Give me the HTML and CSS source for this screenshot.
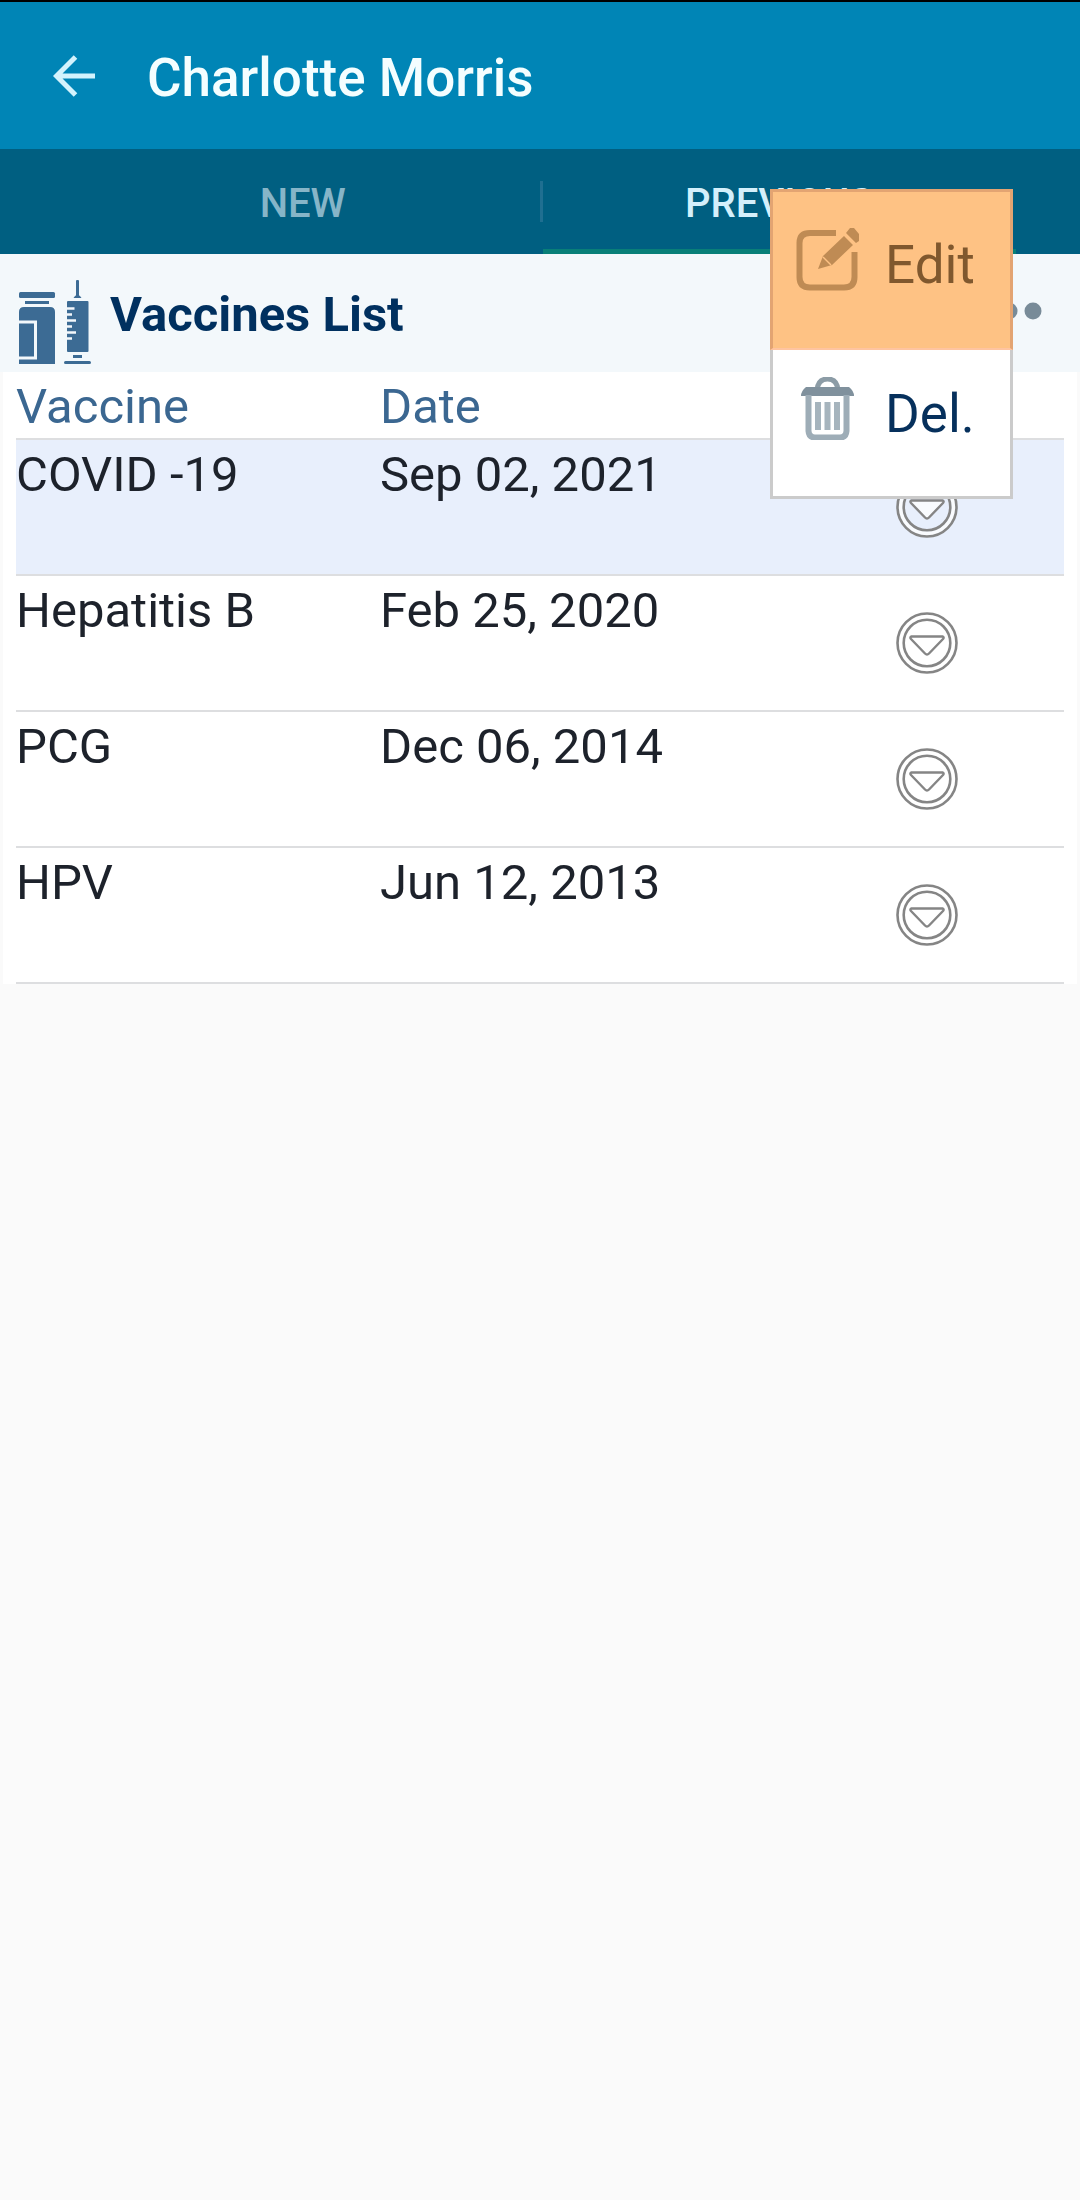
FILE: index.html
```html
<!DOCTYPE html>
<html lang="en">
<head>
<meta charset="utf-8">
<meta name="viewport" content="width=device-width, initial-scale=1">
<title>Charlotte Morris</title>
<link rel="stylesheet" href="styles.css">
</head>
<body>
<svg class="symbols" aria-hidden="true">
  <symbol id="icon-expand" viewBox="0 0 62 62">
    <circle cx="31" cy="31" r="27" fill="none" stroke="#fff" stroke-opacity=".75" stroke-width="5"/>
    <circle cx="31" cy="31" r="29.5" fill="none" stroke="#858585" stroke-width="2.6"/>
    <circle cx="31" cy="31" r="23.3" fill="none" stroke="#858585" stroke-width="2.6"/>
    <path d="M15.500 24.500H46.500Q48.500 25 47 27L33 41.500Q31 43.500 29 41.500L15 27Q13.500 25 15.500 24.500Z" fill="#fff" fill-opacity=".75" stroke="#858585" stroke-width="2.4" stroke-linejoin="round"/>
  </symbol>
</svg>
<header class="app-bar">
  <button class="back" type="button" aria-label="Back">
    <svg width="42" height="42" viewBox="0 0 42 42" fill="none" stroke="#d3f3fd" stroke-width="5"><path d="M22.500 2L3.500 21L22.500 40M4 21H42"/></svg>
  </button>
  <h1 class="app-title">Charlotte Morris</h1>
</header>
<nav class="tabs">
  <a class="tab" href="#new">NEW</a>
  <a class="tab tab-active" href="#previous" aria-current="page">PREVIOUS</a>
</nav>
<main class="content">
  <section class="section-head">
    <svg class="vaccine-icon" width="72" height="84" viewBox="0 0 72 84" fill="#3c6b94">
      <rect x="0" y="12" width="36" height="6" rx="1.500"/>
      <rect x="6" y="21" width="24" height="3"/>
      <path d="M0 32Q0 27 5 27H31Q36 27 36 32V84H0Z"/>
      <path d="M0 42H16.500V78H0" fill="none" stroke="#f3f8fb" stroke-width="3"/>
      <rect x="57" y="0" width="3" height="17" rx="1"/>
      <path d="M54.500 18Q56 15 58.500 15Q61 15 62.500 18Z"/>
      <rect x="48" y="21" width="21.500" height="51" rx="1"/>
      <path d="M47 28.500H55.500M47 34.500H53M47 40.500H57M47 46.500H53M47 52.500H57M47 58.500H53" fill="none" stroke="#f3f8fb" stroke-width="2.700"/>
      <rect x="54" y="75" width="9" height="3"/>
      <rect x="45" y="81" width="27" height="3" rx="1.500"/>
    </svg>
    <h2 class="section-title">Vaccines List</h2>
    <button class="more" type="button" aria-label="More options">
      <svg width="66" height="18" viewBox="0 0 66 18" fill="#788b98"><circle cx="9" cy="9" r="8.500"/><circle cx="33" cy="9" r="8.500"/><circle cx="57" cy="9" r="8.500"/></svg>
    </button>
    <div class="menu" role="menu">
      <button class="menu-item menu-item-pressed" type="button" role="menuitem">
        <svg width="63" height="63" viewBox="0 0 63 63"><path d="M40 5H14Q3.500 5 3.500 15V49Q3.500 59.500 14 59.500H48Q58.500 59.500 58.500 49V24" fill="none" stroke="#bf8b54" stroke-width="6"/><path d="M22 41L27 28L48 8L57 17L36 37ZM50 5L54 0H58L63 6V13L60 15Z" fill="#bf8b54"/><path d="M27 29L35 37" stroke="#fec284" stroke-width="1.500"/></svg>
        <span>Edit</span>
      </button>
      <button class="menu-item" type="button" role="menuitem">
        <svg width="63" height="63" viewBox="0 0 63 63"><path d="M21 13Q22 2 31.500 2Q41 2 42 13" fill="none" stroke="#8c9ca6" stroke-width="5"/><path d="M10 10H53Q58 14 58 19H5Q5 14 10 10Z" fill="#80919d"/><path d="M12.500 18V54Q13 60.500 19 60.500H44Q50 60.500 50.500 54V18" fill="none" stroke="#9eadb7" stroke-width="6"/><path d="M22 25V53M31.500 25V53M41 25V53" stroke="#a6b4bd" stroke-width="6"/></svg>
        <span>Del.</span>
      </button>
    </div>
  </section>
  <div class="list">
    <table class="vaccines">
      <colgroup><col class="col-name"><col><col class="col-action"></colgroup>
      <thead><tr><th scope="col">Vaccine</th><th scope="col">Date</th><td></td></tr></thead>
      <tbody>
        <tr class="selected"><td>COVID -19</td><td>Sep 02, 2021</td><td class="action"><button type="button" aria-label="Options for COVID -19"><svg width="62" height="62"><use href="#icon-expand"/></svg></button></td></tr>
        <tr><td>Hepatitis B</td><td>Feb 25, 2020</td><td class="action"><button type="button" aria-label="Options for Hepatitis B"><svg width="62" height="62"><use href="#icon-expand"/></svg></button></td></tr>
        <tr><td>PCG</td><td>Dec 06, 2014</td><td class="action"><button type="button" aria-label="Options for PCG"><svg width="62" height="62"><use href="#icon-expand"/></svg></button></td></tr>
        <tr><td>HPV</td><td>Jun 12, 2013</td><td class="action"><button type="button" aria-label="Options for HPV"><svg width="62" height="62"><use href="#icon-expand"/></svg></button></td></tr>
      </tbody>
    </table>
  </div>
</main>
</body>
</html>
```
FILE: styles.css
```css
* { box-sizing: border-box; }

body {
  margin: 0;
  min-height: 100vh;
  background: #fafafa;
  color: #1d222b;
  font-family: Roboto, "Liberation Sans", sans-serif;
}

button {
  margin: 0;
  padding: 0;
  border: 0;
  background: none;
  color: inherit;
  font: inherit;
  cursor: pointer;
}

svg { display: block; }

.symbols {
  position: absolute;
  width: 0;
  height: 0;
}

.app-bar {
  display: flex;
  align-items: center;
  gap: 52px;
  height: 149px;
  padding: 0 53px;
  border-top: 2px solid #000;
  background: #0085b6;
}

.app-title {
  margin: 0;
  padding-top: 4px;
  color: #f4feff;
  font-size: 53px;
  font-weight: 500;
  line-height: 64px;
}

.tabs {
  display: flex;
  justify-content: center;
  height: 105px;
  padding: 0 64px 0 66px;
  background: #005f81;
}

.tab {
  position: relative;
  flex: 1;
  padding-top: 5px;
  color: #86b5c8;
  font-size: 40px;
  font-weight: 500;
  line-height: 100px;
  text-align: center;
  text-decoration: none;
}

.tab-active {
  margin-left: 3px;
  border-bottom: 5px solid #087f78;
  color: #d4f0fb;
}

.tab-active::before {
  content: "";
  position: absolute;
  top: 32px;
  left: -3px;
  width: 3px;
  height: 41px;
  background: #1f6f91;
}

.section-head {
  position: relative;
  display: flex;
  align-items: center;
  gap: 19px;
  height: 118px;
  padding: 0 38px 0 19px;
  background: #f3f8fb;
}

.vaccine-icon { margin-top: 18px; }

.section-title {
  flex: 1;
  margin: 0;
  padding-top: 4px;
  color: #00305f;
  font-size: 49px;
  font-weight: 700;
  line-height: 56px;
}

.more { margin-bottom: 4px; }

.menu {
  position: absolute;
  z-index: 1;
  top: -65px;
  right: 67px;
  width: 243px;
  border: 3px solid #cbcbcb;
  background: #fff;
}

.menu-item {
  display: flex;
  align-items: flex-start;
  gap: 26px;
  width: 100%;
  height: 146px;
  padding: 27px 0 0 23px;
  color: #06305c;
  font-size: 53px;
  line-height: 64px;
  text-align: left;
}

.menu-item span { padding-top: 5px; }

.menu-item-pressed {
  width: 243px;
  height: 161px;
  margin: -3px -3px 0;
  padding: 36px 0 0 23px;
  border: 3px solid #e3a472;
  border-bottom: 2px solid #ffc4a0;
  background: #fec284;
  color: #80582e;
}

.list {
  margin: 0 3px;
  padding: 0 13px;
  background: #fff;
}

.vaccines {
  width: 100%;
  border-collapse: separate;
  border-spacing: 0;
  table-layout: fixed;
  font-size: 49px;
}

.col-name { width: 364px; }
.col-action { width: 274px; }

.vaccines th,
.vaccines td {
  padding: 0;
  border-bottom: 2px solid #dddee0;
  font-weight: 400;
  line-height: 62px;
  text-align: left;
  vertical-align: top;
}

.vaccines th {
  height: 68px;
  padding-top: 4px;
  color: #3b6791;
}

.vaccines tbody td {
  height: 136px;
  padding-top: 4px;
}

.vaccines tbody .action {
  padding-top: 36px;
}

.action button {
  display: block;
  margin: 0 auto;
}

.selected { background: #e8effc; }
```
